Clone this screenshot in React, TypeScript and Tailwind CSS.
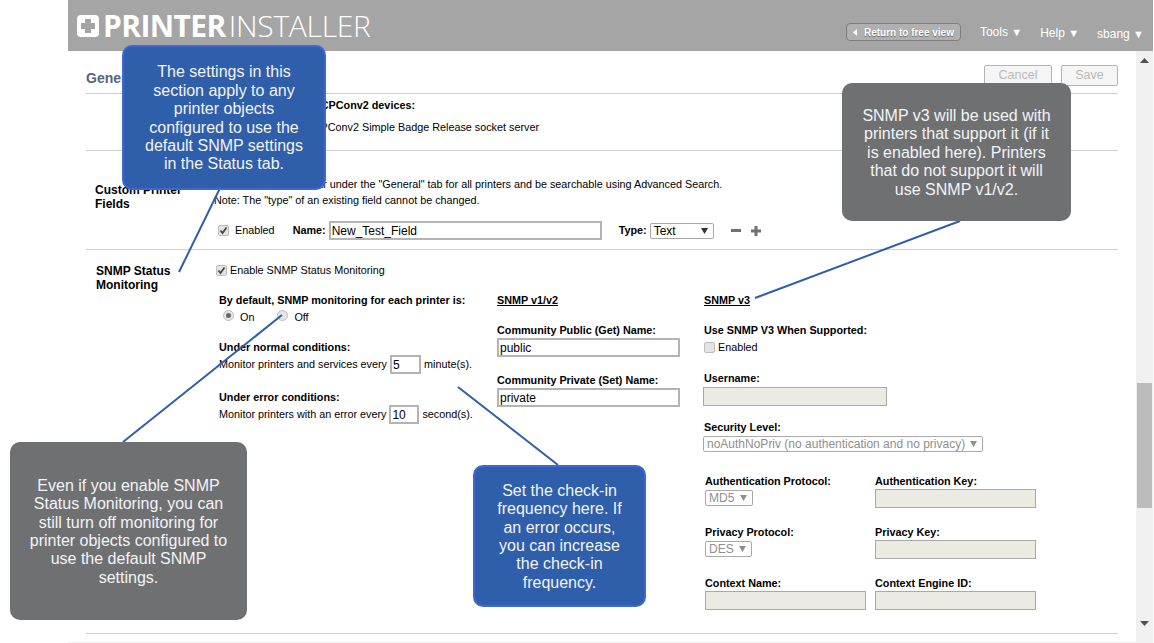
import type React from "react"

const font = "font-['Liberation_Sans',Arial,sans-serif]"

function Field({ value, className }: { value?: string; className: string }) {
  return (
    <input
      readOnly
      value={value ?? ""}
      className={`block h-[19px] border-2 border-[#b4b4b4] px-[1px] text-[12px] text-black outline-none ${className}`}
    />
  )
}

function DisabledField({ className }: { className: string }) {
  return <div className={`h-[19px] border border-[#a9a9a9] bg-[#ebebe4] ${className}`} />
}

function Select({ value, className, disabled }: { value: string; className: string; disabled?: boolean }) {
  return (
    <div
      className={`flex h-[16px] items-center justify-between rounded-[2px] border border-[#a9a9a9] pl-[3px] pr-[5px] text-[12px] ${
        disabled ? "text-[#8f8f8f]" : "text-black"
      } ${className}`}
    >
      <span>{value}</span>
      <svg width="7" height="6" viewBox="0 0 7 6">
        <path d="M0 0h7L3.5 6z" fill={disabled ? "#8f8f8f" : "#333"} />
      </svg>
    </div>
  )
}

function Check({ checked }: { checked?: boolean }) {
  return (
    <span className="flex h-[11px] w-[11px] shrink-0 items-center justify-center rounded-[2px] border border-[#bdbdbd] bg-[#e3e3e3]">
      {checked && (
        <svg width="9" height="9" viewBox="0 0 9 9">
          <path d="M1.5 4.5L3.5 7L7.5 1.5" fill="none" stroke="#444" strokeWidth="1.7" />
        </svg>
      )}
    </span>
  )
}

function Radio({ checked }: { checked?: boolean }) {
  return (
    <span className="flex h-[11px] w-[11px] -translate-y-[2px] items-center justify-center rounded-full border border-[#bdbdbd] bg-[#e6e6e6]">
      {checked && <span className="h-[5px] w-[5px] rounded-full bg-[#666]" />}
    </span>
  )
}

function Label({ children, className = "" }: { children: React.ReactNode; className?: string }) {
  return <div className={`text-[10.8px] font-bold leading-[13px] text-black ${className}`}>{children}</div>
}

function Callout({ className, children }: { className: string; children: React.ReactNode }) {
  return (
    <div
      className={`absolute flex items-center justify-center rounded-[10px] pt-[2px] text-center text-[16px] leading-[18.4px] text-[#f2f4f8] ${className}`}
    >
      <div>{children}</div>
    </div>
  )
}

function Header() {
  return (
    <header className="flex h-[51px] items-start bg-[#a5a5a5] text-white">
      <div className="ml-[9px] mt-[11px] flex items-center">
        <svg width="22" height="22" viewBox="0 0 22 22" className="mr-[4px]">
          <rect width="22" height="22" rx="4" fill="#fff" />
          <path d="M8 4h6v4h4v6h-4v4H8v-4H4V8h4z" fill="#a5a5a5" />
        </svg>
        <span className="font-['Open_Sans',sans-serif] text-[30px] font-bold leading-[30px] tracking-[-0.6px]">
          PRINTER
        </span>
        <span className="ml-[3px] font-['Open_Sans',sans-serif] text-[30px] font-light leading-[30px] tracking-[-0.3px]">
          INSTALLER
        </span>
      </div>
      <div className="ml-auto mr-[9px] mt-[23px] flex items-start text-[12px] leading-[16px]">
        <button className="mr-[19px] flex h-[18px] w-[115px] items-center rounded-[4px] border border-[#7d7d7d] bg-[#b0b0b0] pl-[6px] pt-[1px] text-[10px] font-bold text-white [text-shadow:0_1px_1px_rgba(0,0,0,0.4)]">
          <svg width="4" height="7" viewBox="0 0 4 7" className="mr-[7px]">
            <path d="M4 0v7L0 3.500z" fill="#fff" />
          </svg>
          Return to free view
        </button>
        <span className="mr-[18px] mt-[1px]">
          Tools <span className="text-[11px]">▼</span>
        </span>
        <span className="mr-[18px] mt-[2px]">
          Help <span className="text-[11px]">▼</span>
        </span>
        <span className="mt-[3px]">
          sbang <span className="text-[11px]">▼</span>
        </span>
      </div>
    </header>
  )
}

export default function App() {
  return (
    <div className={`relative flex h-[643px] w-[1153px] overflow-hidden bg-white ${font}`}>
      <div className="w-[68px] shrink-0" />
      <div className="flex min-w-0 flex-1 flex-col">
        <Header />
        <div className="flex min-h-0 flex-1">
          <main className="w-[1068px] pl-[18px] pr-[18px]">
            <div className="flex h-[43px] items-start justify-between border-b border-[#d0d0d0] pt-[14px]">
              <h1 className="pt-[5px] text-[14px] font-bold leading-[16px] text-[#56647c]">General</h1>
              <div className="flex gap-[9px]">
                <button className="h-[21px] w-[68px] rounded-[2px] border border-[#b5b5b5] bg-[#f5f5f5] text-[12.5px] text-[#b9b9b9]">
                  Cancel
                </button>
                <button className="h-[21px] w-[57px] rounded-[2px] border border-[#b5b5b5] bg-[#f5f5f5] text-[12.5px] text-[#b9b9b9]">
                  Save
                </button>
              </div>
            </div>

            <section className="h-[57px] border-b border-[#d0d0d0] pt-[5px] text-right">
              <div className="w-[329px]">
                <Label>Enable TCPConv2 devices:</Label>
              </div>
              <p className="mt-[9px] w-[453px] text-[10.8px] leading-[13px] text-black">
                Enable TCPConv2 Simple Badge Release socket server
              </p>
            </section>

            <section className="flex h-[99px] border-b border-[#d0d0d0]">
              <div className="w-[128px] pl-[9px] pt-[32px] text-[12px] font-bold leading-[14px] text-black">
                Custom Printer
                <br />
                Fields
              </div>
              <div className="pt-[25px]">
                <p className="text-[10.8px] leading-[16px] text-black">
                  These fields will appear under the "General" tab for all printers and be searchable using Advanced Search.
                </p>
                <p className="text-[10.8px] leading-[16px] text-black">Note: The "type" of an existing field cannot be changed.</p>
                <div className="ml-[4px] mt-[13px] flex items-center text-[10.8px]">
                  <Check checked />
                  <span className="ml-[6px]">Enabled</span>
                  <span className="ml-[18px] font-bold">Name:</span>
                  <Field value="New_Test_Field" className="ml-[3px] w-[273px]" />
                  <span className="ml-[17px] font-bold">Type:</span>
                  <Select value="Text" className="ml-[3px] w-[64px]" />
                  <span className="ml-[17px] h-[3px] w-[10px] bg-[#707070]" />
                  <svg width="10" height="10" viewBox="0 0 10 10" className="ml-[10px]">
                    <path d="M3.500 0h3v3.500H10v3H6.500V10h-3V6.500H0v-3h3.500z" fill="#707070" />
                  </svg>
                </div>
              </div>
            </section>

            <section className="flex h-[384px] border-b border-[#d0d0d0]">
              <div className="w-[130px] pl-[10px] pt-[14px] text-[12px] font-bold leading-[14px] text-black">
                SNMP Status
                <br />
                Monitoring
              </div>
              <div className="min-w-0 flex-1 pt-[14px]">
                <div className="flex items-center text-[10.8px] leading-[13px] text-black">
                  <Check checked />
                  <span className="ml-[3px]">Enable SNMP Status Monitoring</span>
                </div>
                <div className="mt-[17px] flex">
                  <div className="w-[281px] pl-[3px]">
                    <Label>By default, SNMP monitoring for each printer is:</Label>
                    <div className="ml-[4px] mt-[4px] flex items-center text-[10.8px] leading-[13px]">
                      <Radio checked />
                      <span className="ml-[6px]">On</span>
                      <span className="ml-[23px]">
                        <Radio />
                      </span>
                      <span className="ml-[6px]">Off</span>
                    </div>
                    <Label className="mt-[17px]">Under normal conditions:</Label>
                    <div className="mt-[1px] flex items-center text-[10.8px] leading-[13px]">
                      Monitor printers and services every
                      <Field value="5" className="mx-[3px] w-[31px]" />
                      minute(s).
                    </div>
                    <Label className="mt-[17px]">Under error conditions:</Label>
                    <div className="mt-[1px] flex items-center text-[10.8px] leading-[13px]">
                      Monitor printers with an error every
                      <Field value="10" className="mx-[3px] w-[30px]" />
                      second(s).
                    </div>
                  </div>

                  <div className="w-[207px]">
                    <Label className="underline">SNMP v1/v2</Label>
                    <Label className="mt-[17px]">Community Public (Get) Name:</Label>
                    <Field value="public" className="mt-[1px] w-[183px]" />
                    <Label className="mt-[17px]">Community Private (Set) Name:</Label>
                    <Field value="private" className="mt-[1px] w-[183px]" />
                  </div>

                  <div>
                    <Label className="underline">SNMP v3</Label>
                    <Label className="mt-[17px]">Use SNMP V3 When Supported:</Label>
                    <div className="mt-[4px] flex items-center text-[10.8px] leading-[13px]">
                      <Check />
                      <span className="ml-[3px]">Enabled</span>
                    </div>
                    <Label className="mt-[18px]">Username:</Label>
                    <DisabledField className="-ml-[1px] mt-[2px] w-[184px]" />
                    <Label className="mt-[15px]">Security Level:</Label>
                    <Select disabled value="noAuthNoPriv (no authentication and no privacy)" className="-ml-[1px] mt-[2px] w-[280px]" />
                    <div className="ml-[1px] mt-[23px] grid w-[332px] grid-cols-[170px_161px]">
                      <div>
                        <Label>Authentication Protocol:</Label>
                        <Select disabled value="MD5" className="mt-[2px] w-[48px]" />
                      </div>
                      <div>
                        <Label>Authentication Key:</Label>
                        <DisabledField className="mt-[1px] w-[161px]" />
                      </div>
                      <div className="mt-[18px]">
                        <Label>Privacy Protocol:</Label>
                        <Select disabled value="DES" className="mt-[2px] w-[47px]" />
                      </div>
                      <div className="mt-[18px]">
                        <Label>Privacy Key:</Label>
                        <DisabledField className="mt-[1px] w-[161px]" />
                      </div>
                      <div className="mt-[18px]">
                        <Label>Context Name:</Label>
                        <DisabledField className="mt-[1px] w-[161px]" />
                      </div>
                      <div className="mt-[18px]">
                        <Label>Context Engine ID:</Label>
                        <DisabledField className="mt-[1px] w-[161px]" />
                      </div>
                    </div>
                  </div>
                </div>
              </div>
            </section>
          </main>

          <div className="flex w-[17px] flex-col items-center bg-[#f0f0f0] text-[#505050]">
            <svg width="9" height="5" viewBox="0 0 9 5" className="mt-[7px]">
              <path d="M0 5L4.500 0L9 5z" fill="#505050" />
            </svg>
            <div className="mt-[320px] h-[125px] w-[15px] bg-[#bcbcbc]" />
            <svg width="9" height="5" viewBox="0 0 9 5" className="mt-[113px]">
              <path d="M0 0L4.500 5L9 0z" fill="#505050" />
            </svg>
          </div>
        </div>
        <div className="h-[1px] shrink-0 bg-[#f0f0f0]" />
      </div>

      {/* connector lines that run from the callouts to the form */}
      <svg className="pointer-events-none absolute left-0 top-0" width="1154" height="643">
        <g stroke="#2f5eaa" strokeWidth="2" fill="none">
          <path d="M224 180L179 272" />
          <path d="M123 442L282 315" />
          <path d="M458 387L558 465" />
          <path d="M755 298L960 221" />
        </g>
      </svg>

      <Callout className="left-[122px] top-[45px] h-[145px] w-[204px] border-2 border-[#4068d4] bg-[#2f5eaa]">
        The settings in this
        <br />
        section apply to any
        <br />
        printer objects
        <br />
        configured to use the
        <br />
        default SNMP settings
        <br />
        in the Status tab.
      </Callout>
      <Callout className="left-[842px] top-[83px] h-[138px] w-[229px] bg-[#6f7072]">
        SNMP v3 will be used with
        <br />
        printers that support it (if it
        <br />
        is enabled here). Printers
        <br />
        that do not support it will
        <br />
        use SNMP v1/v2.
      </Callout>
      <Callout className="left-[10px] top-[442px] h-[178px] w-[237px] bg-[#6f7072]">
        Even if you enable SNMP
        <br />
        Status Monitoring, you can
        <br />
        still turn off monitoring for
        <br />
        printer objects configured to
        <br />
        use the default SNMP
        <br />
        settings.
      </Callout>
      <Callout className="left-[473px] top-[465px] h-[142px] w-[173px] border-2 border-[#4068d4] bg-[#2f5eaa]">
        Set the check-in
        <br />
        frequency here. If
        <br />
        an error occurs,
        <br />
        you can increase
        <br />
        the check-in
        <br />
        frequency.
      </Callout>
    </div>
  )
}
